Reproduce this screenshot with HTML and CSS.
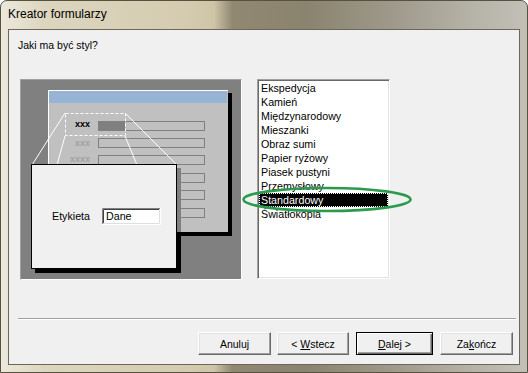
FILE: index.html
```html
<!DOCTYPE html>
<html lang="pl">
<head>
<meta charset="utf-8">
<title>Kreator formularzy</title>
<link rel="stylesheet" href="styles.css">
</head>
<body>
<div class="window">
  <div class="titlebar"><span class="title">Kreator formularzy</span></div>
  <div class="client">
    <div class="prompt">Jaki ma być styl?</div>
    <div class="main">
      <div class="preview">
        <svg width="220" height="199" viewBox="21 80 220 199" xmlns="http://www.w3.org/2000/svg">
          <rect x="21" y="80" width="220" height="199" fill="#808080"/>
          <rect x="51" y="93" width="181" height="143" fill="#000"/>
          <rect x="48" y="90" width="180" height="142" fill="#c0c0c0"/>
          <line x1="48" y1="90.5" x2="228" y2="90.5" stroke="#fff"/>
          <line x1="48.5" y1="90" x2="48.5" y2="232" stroke="#fff"/>
          <rect x="49" y="91" width="178" height="12" fill="#98b4d4"/>
          <g fill="none" stroke="#808080">
            <rect x="98.5" y="121.5" width="106" height="9"/>
            <rect x="98.5" y="138.5" width="106" height="9"/>
            <rect x="98.5" y="155.5" width="106" height="9"/>
            <rect x="98.5" y="173.5" width="106" height="9"/>
            <rect x="98.5" y="190.5" width="106" height="9"/>
            <rect x="98.5" y="208.5" width="106" height="9"/>
          </g>
          <rect x="98" y="121" width="27" height="10" fill="#808080"/>
          <g class="xlab" text-anchor="end">
            <text x="90" y="127" fill="#000">xxx</text>
            <text x="90" y="146" fill="#a0a0a0">xxx</text>
            <text x="90" y="162" fill="#a0a0a0">xxxx</text>
          </g>
          <rect x="65.5" y="113.5" width="60" height="22" fill="none" stroke="#fff" stroke-dasharray="3 2"/>
          <g stroke="#fff" stroke-width="1">
            <line x1="65" y1="113" x2="32" y2="165"/>
            <line x1="65" y1="136" x2="57" y2="165"/>
            <line x1="125" y1="113" x2="177" y2="165"/>
            <line x1="125" y1="136" x2="137" y2="165"/>
          </g>
          <rect x="35" y="168" width="146" height="105" fill="#000"/>
          <rect x="177" y="168" width="4" height="64" fill="#808080"/>
          <rect x="31.5" y="164.5" width="145" height="104" fill="#f0f0f0" stroke="#000"/>
          <text class="plab" x="52" y="220">Etykieta</text>
          <rect x="102" y="208" width="59" height="17" fill="#fff"/>
          <path d="M102.5 225 V208.5 H161" fill="none" stroke="#808080"/>
          <path d="M103.5 224 V209.5 H160" fill="none" stroke="#404040"/>
          <path d="M102 224.5 H160.5 V208" fill="none" stroke="#fff"/>
          <path d="M103 223.5 H159.5 V209" fill="none" stroke="#dfdfdf"/>
          <text class="plab" x="106" y="220">Dane</text>
        </svg>
      </div>
      <ul class="list">
        <li>Ekspedycja</li>
        <li>Kamień</li>
        <li>Międzynarodowy</li>
        <li>Mieszanki</li>
        <li>Obraz sumi</li>
        <li>Papier ryżowy</li>
        <li>Piasek pustyni</li>
        <li>Przemysłowy</li>
        <li class="sel">Standardowy</li>
        <li>Światłokopia</li>
      </ul>
    </div>
    <div class="sep"></div>
    <div class="buttons">
      <button class="btn b-cancel">Anuluj</button>
      <button class="btn b-back">&lt; <u>W</u>stecz</button>
      <button class="btn b-next default"><u>D</u>alej &gt;</button>
      <button class="btn b-finish">Za<u>k</u>ończ</button>
    </div>
  </div>
  <svg class="annot" width="176" height="32" viewBox="0 0 176 32" xmlns="http://www.w3.org/2000/svg">
    <ellipse cx="86" cy="15.5" rx="83.5" ry="11.5" fill="none" stroke="#2a9a4c" stroke-width="2.6"/>
  </svg>
</div>
</body>
</html>
```
FILE: styles.css
```css
* { box-sizing: border-box; }
html, body { margin: 0; padding: 0; background: #fff; }
body { width: 528px; height: 373px; overflow: hidden; font-family: "Liberation Sans", Arial, sans-serif; }

.window {
  position: relative;
  width: 528px;
  height: 373px;
  border: 1px solid #56523f;
  border-radius: 7px 7px 0 0;
  padding: 0 7px 7px 7px;
  display: flex;
  flex-direction: column;
  background: linear-gradient(to right, #ece8dc 0%, #ddd6bf 8%, #d4cbaf 36%, #cec4a6 40.5%, #918872 44%, #8a836e 58%, #9f9a8c 75%, #b6b3a8 90%, #c2c0b7 100%);
}

.titlebar {
  height: 28px;
  padding: 6px 0 0 0;
  flex: none;
}
.title {
  font-size: 12px;
  line-height: 15px;
  color: #000;
  display: block;
}

.client {
  width: 512px;
  height: 336px;
  flex: none;
  background: #f0f0f0;
  border: 1px solid #6c675a;
  display: flex;
  flex-direction: column;
}

.prompt {
  font-size: 10.5px;
  line-height: 14px;
  padding: 8px 0 0 9px;
  color: #000;
}

.main {
  display: flex;
  gap: 15px;
  margin: 27px 0 0 11px;
  height: 201px;
}

.preview {
  width: 222px;
  height: 201px;
  border: 1px solid;
  border-color: #a0a0a0 #fff #fff #a0a0a0;
}
.preview svg { display: block; }
.xlab { font-family: "Liberation Sans", Arial, sans-serif; font-size: 9px; font-weight: bold; }
.plab { font-family: "Liberation Sans", Arial, sans-serif; font-size: 10.7px; fill: #000; }

.list {
  list-style: none;
  margin: 0;
  padding: 0 1px;
  width: 133px;
  height: 200px;
  background: #fff;
  border: 1px solid;
  border-color: #a0a0a0 #fff #fff #a0a0a0;
  box-shadow: inset 1px 1px 0 #696969, inset -1px -1px 0 #e3e3e3;
  padding: 1px 1px;
  font-size: 10.7px;
}
.list li {
  height: 14px;
  line-height: 14px;
  padding-left: 2px;
  color: #000;
  white-space: nowrap;
}
.list li.sel {
  background: #000;
  color: #fff;
  outline: 1px dotted #fff;
  outline-offset: -1px;
}

.sep {
  margin: 38px 0 0 9px;
  width: 498px;
  height: 2px;
  border-top: 1px solid #a0a0a0;
  border-bottom: 1px solid #fff;
}

.buttons {
  display: flex;
  justify-content: flex-end;
  padding-right: 6px;
  margin-top: 12px;
}
.btn {
  height: 23px;
  width: 73px;
  margin: 0 0 0 7px;
  padding: 0;
  font-family: "Liberation Sans", Arial, sans-serif;
  font-size: 10.5px;
  color: #000;
  background: #f0f0f0;
  border: 1px solid;
  border-color: #fff #696969 #696969 #fff;
  box-shadow: inset -1px -1px 0 #a0a0a0, inset 1px 1px 0 #e3e3e3;
  border-radius: 0;
}
.btn u { text-decoration: underline; }
.b-back { width: 72px; margin-left: 6px; }
.b-next { width: 77px; }
.btn.default {
  border: 1px solid #000;
  box-shadow: inset 1px 1px 0 #fff, inset -1px -1px 0 #696969, inset -2px -2px 0 #a0a0a0;
}

.annot {
  position: absolute;
  left: 240px;
  top: 183px;
  pointer-events: none;
}
```
